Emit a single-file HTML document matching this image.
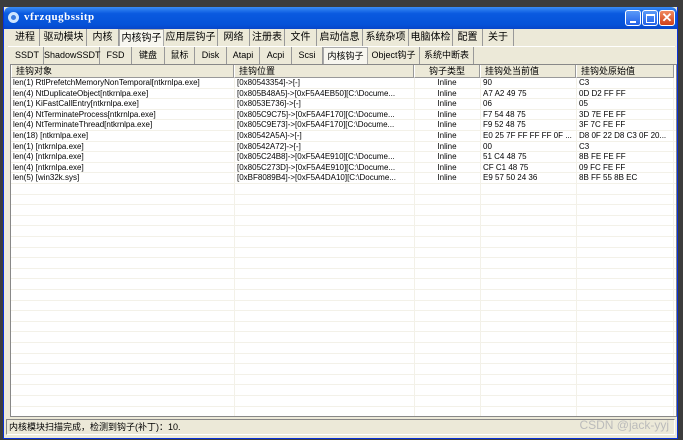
<!DOCTYPE html>
<html><head><meta charset="utf-8"><style>
*{margin:0;padding:0;box-sizing:border-box}
body{width:683px;height:440px;background:#3c3c3c;position:relative;overflow:hidden;font-family:"Liberation Sans","Noto Sans CJK SC",sans-serif;font-size:8px;color:#000}
.win{position:absolute;left:3px;top:7px;width:675px;height:432px;background:#ece9d8;border:1px solid #0831d9;border-top:none}
.title{position:absolute;left:0;top:0;width:673px;height:22px;background:linear-gradient(#3a8cf5,#0a5ae0 30%,#0552d8 80%,#0845c8);border-radius:6px 6px 0 0}
.title .t{position:absolute;left:20px;top:4px;color:#fff;font-family:"Liberation Serif",serif;font-weight:bold;font-size:11px;letter-spacing:.5px}
.ico{position:absolute;left:4px;top:5px;width:11px;height:11px;border-radius:50%;border:3px solid #cfe6ff;background:#3a7be0}
.btn{position:absolute;top:3px;width:16px;height:16px;border:1px solid #fff;border-radius:3px;background:linear-gradient(#5b9af8,#2060e8)}
.btn.x{background:linear-gradient(#f08a60,#d04018)}
.tab{position:absolute;height:17px;border-right:1px solid #999;line-height:17px;font-size:10px;white-space:nowrap;text-align:center}
.tab.s{background:#f7f6ef;border:1px solid #aaa;border-bottom:none}
.t2{font-size:9px}
.grid{position:absolute;left:6px;top:57px;width:667px;height:353px;background:#fff;border:1px solid #888;overflow:hidden}
.hdr{position:absolute;top:0;height:13px;background:#ece9d8;border-right:1px solid #999;border-bottom:1px solid #999;border-left:1px solid #fff;line-height:12px;font-size:9px;padding-left:4px}
.vl{position:absolute;top:13px;bottom:0;width:1px;background:#f3f1e8}
.row{position:absolute;left:0;width:667px;height:10.6px;border-bottom:1px solid #f3f1e8}
.c{position:absolute;top:0;line-height:10px;white-space:nowrap;font-size:8px}
.status{position:absolute;left:2px;top:412px;width:669px;height:16px;border:1px solid #888;border-right-color:#fff;border-bottom-color:#fff;line-height:14px;font-size:9px;padding-left:2px}
.wm{position:absolute;right:8px;top:411px;color:#bbb;font-size:12px;font-family:"Liberation Sans",sans-serif}
</style></head><body>
<div class="win">
<div class="title"><div class="ico"></div><div class="t">vfrzqugbssitp</div>
<div class="btn" style="left:621px"><div style="position:absolute;left:4px;top:10px;width:6px;height:2px;background:#fff"></div></div>
<div class="btn" style="left:638px"><div style="position:absolute;left:3px;top:3px;width:9px;height:9px;border:1px solid #fff;border-top-width:2px"></div></div>
<div class="btn x" style="left:655px;color:#fff;font-size:13px;text-align:center;line-height:14px;font-weight:bold">✕</div>
</div>
<div id="tabs"></div>
<div style="position:absolute;left:4px;top:39px;width:667px;height:1px;background:#fff"></div>
<div class="grid">
<div class="hdr" style="left:0;width:223px">挂钩对象</div>
<div class="hdr" style="left:223px;width:180px">挂钩位置</div>
<div class="hdr" style="left:403px;width:66px;text-align:center;padding:0">钩子类型</div>
<div class="hdr" style="left:469px;width:96px">挂钩处当前值</div>
<div class="hdr" style="left:565px;width:98px">挂钩处原始值</div>
<div class="vl" style="left:223px"></div><div class="vl" style="left:403px"></div><div class="vl" style="left:469px"></div><div class="vl" style="left:565px"></div><div class="vl" style="left:662px"></div>
<div id="rows"></div>
</div>
<div class="status">内核模块扫描完成，检测到钩子(补丁)：10.</div>
<div class="wm">CSDN @jack-yyj</div>
</div>
<script>
var t1=[["进程",10,38],["驱动模块",40,85],["内核",86,117],["内核钩子",118,162,1],["应用层钩子",163,216],["网络",217,248],["注册表",249,283],["文件",284,315],["启动信息",316,361],["系统杂项",362,407],["电脑体检",408,451],["配置",452,481],["关于",482,512]];
var t2=[["SSDT",10,42],["ShadowSSDT",43,98],["FSD",99,130],["键盘",131,163],["鼠标",164,193],["Disk",194,225],["Atapi",226,258],["Acpi",259,290],["Scsi",291,321],["内核钩子",322,366,1],["Object钩子",367,418],["系统中断表",419,472]];
var h="";
t1.forEach(function(a){h+='<div class="tab'+(a[3]?' s':'')+'" style="top:22px;left:'+(a[1]-3)+'px;width:'+(a[2]-a[1]+1)+'px">'+a[0]+'</div>';});
t2.forEach(function(a){h+='<div class="tab t2'+(a[3]?' s':'')+'" style="top:40px;font-size:9px;left:'+(a[1]-3)+'px;width:'+(a[2]-a[1]+1)+'px">'+a[0]+'</div>';});
document.getElementById("tabs").innerHTML=h;
var d=[["len(1) RtlPrefetchMemoryNonTemporal[ntkrnlpa.exe]","[0x80543354]->[-]","90","C3"],
["len(4) NtDuplicateObject[ntkrnlpa.exe]","[0x805B48A5]->[0xF5A4EB50][C:\\Docume...","A7 A2 49 75","0D D2 FF FF"],
["len(1) KiFastCallEntry[ntkrnlpa.exe]","[0x8053E736]->[-]","06","05"],
["len(4) NtTerminateProcess[ntkrnlpa.exe]","[0x805C9C75]->[0xF5A4F170][C:\\Docume...","F7 54 48 75","3D 7E FE FF"],
["len(4) NtTerminateThread[ntkrnlpa.exe]","[0x805C9E73]->[0xF5A4F170][C:\\Docume...","F9 52 48 75","3F 7C FE FF"],
["len(18) [ntkrnlpa.exe]","[0x80542A5A]->[-]","E0 25 7F FF FF FF 0F ...","D8 0F 22 D8 C3 0F 20..."],
["len(1) [ntkrnlpa.exe]","[0x80542A72]->[-]","00","C3"],
["len(4) [ntkrnlpa.exe]","[0x805C24B8]->[0xF5A4E910][C:\\Docume...","51 C4 48 75","8B FE FE FF"],
["len(4) [ntkrnlpa.exe]","[0x805C273D]->[0xF5A4E910][C:\\Docume...","CF C1 48 75","09 FC FE FF"],
["len(5) [win32k.sys]","[0xBF8089B4]->[0xF5A4DA10][C:\\Docume...","E9 57 50 24 36","8B FF 55 8B EC"]];
h="";
for(var i=0;i<32;i++){var r=d[i];var y=13+i*10.6;
h+='<div class="row" style="top:'+y+'px">';
if(r){h+='<div class="c" style="left:2px">'+r[0]+'</div><div class="c" style="left:226px">'+r[1]+'</div><div class="c" style="left:403px;width:66px;text-align:center">Inline</div><div class="c" style="left:472px">'+r[2]+'</div><div class="c" style="left:568px">'+r[3]+'</div>';}
h+='</div>';}
document.getElementById("rows").innerHTML=h;
</script>
</body></html>
